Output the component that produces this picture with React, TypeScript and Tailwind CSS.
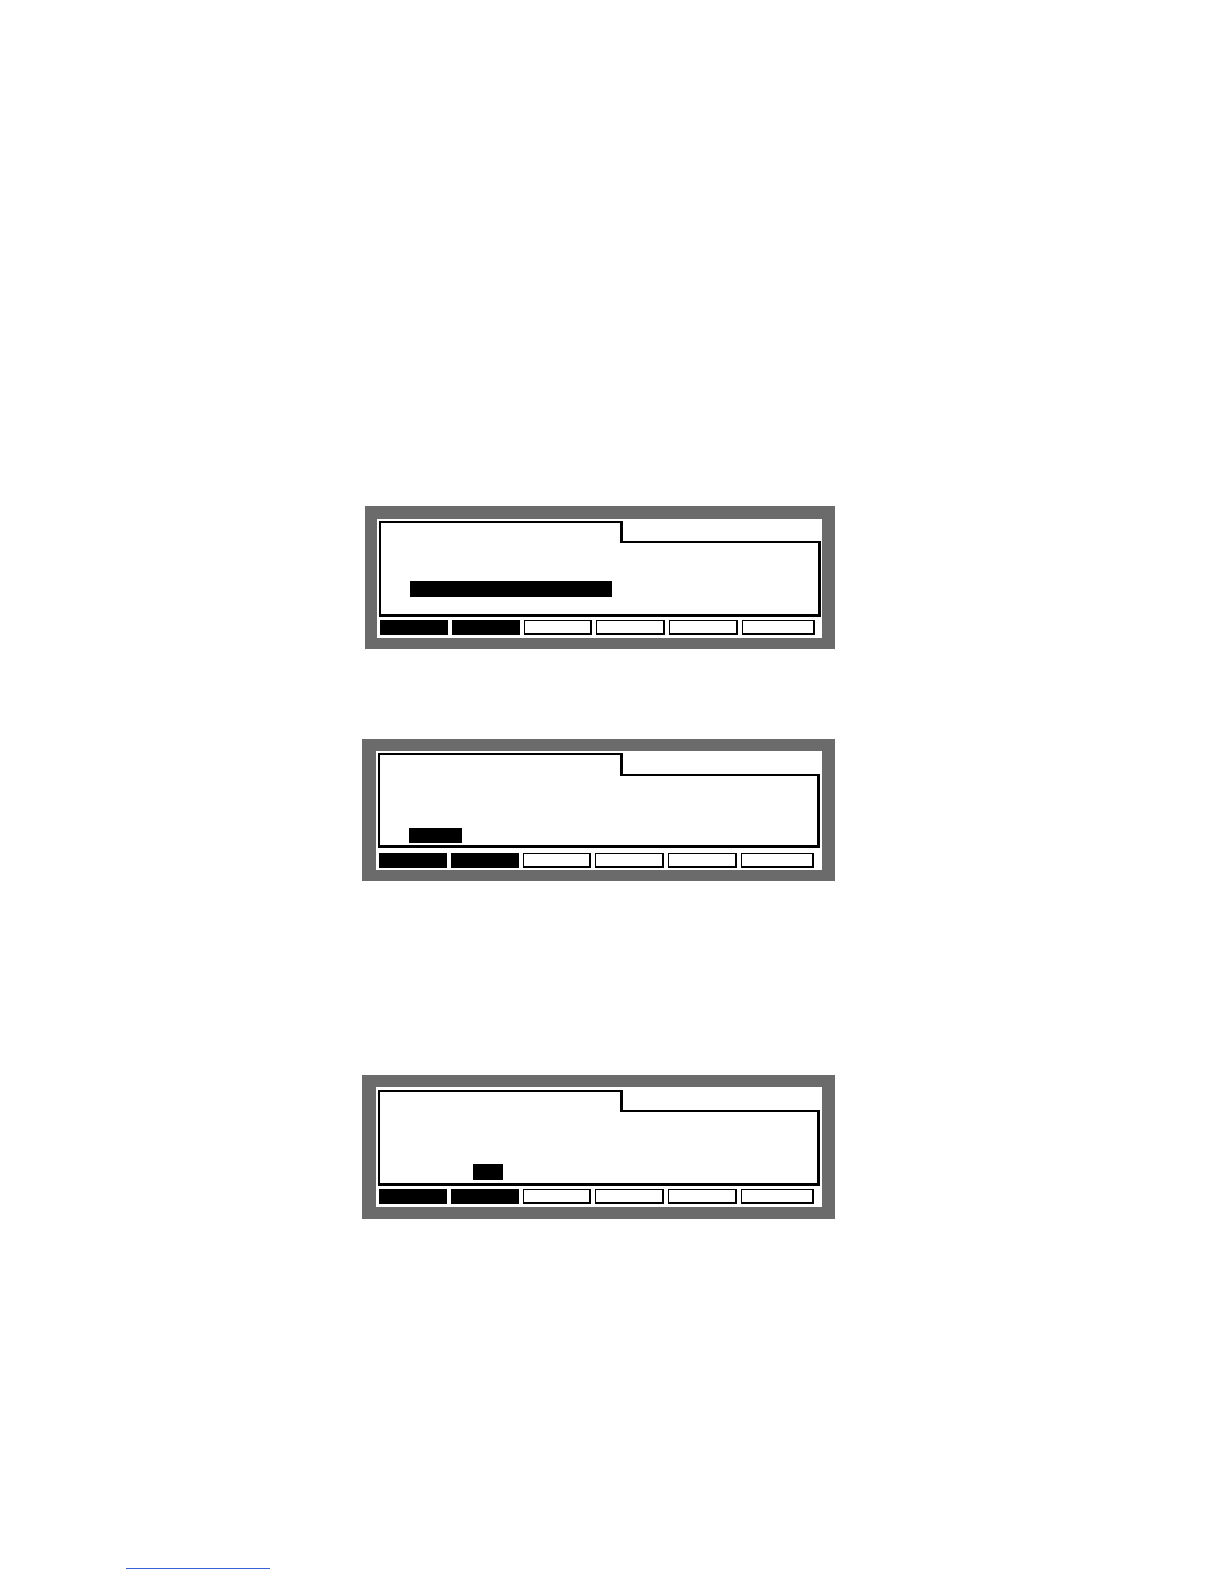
import React from "react";

type PanelProps = {
  ml: string;
  mt: string;
  w: string;
  pad: string;
  innerPad: string;
  tabW: string;
  tabH: string;
  bodyH: string;
  barPad: string;
  barW: string;
  barH: string;
  gapBtn: string;
};

function Buttons({ gap }: { gap: string }) {
  const widths = ["w-[68px]", "w-[68px]", "w-[68px]", "w-[69px]", "w-[69px]", "w-[73px]"];
  return (
    <div className={`flex gap-[4px] ml-[1px] h-[15px] ${gap}`}>
      {widths.map((w, i) =>
        i < 2 ? (
          <div key={i} className={`${w} h-full bg-black`} />
        ) : (
          <div
            key={i}
            className={`${w} h-full bg-white border-t border-l border-r-2 border-b-2 border-black`}
          />
        )
      )}
    </div>
  );
}

function Panel(p: PanelProps) {
  return (
    <div className={`${p.ml} ${p.mt} ${p.w} bg-[#6b6b6b] ${p.pad}`}>
      <div className={`bg-white flex flex-col ${p.innerPad}`}>
        <div className="w-[442px] flex flex-col">
          <div className="flex items-end">
            <div
              className={`${p.tabW} ${p.tabH} border-t-2 border-l-2 border-r-[3px] border-black bg-white shrink-0`}
            />
            <div className="flex-1 h-[2px] bg-black" />
          </div>
          <div
            className={`${p.bodyH} border-l-2 border-r-[3px] border-b-[3px] border-black ${p.barPad}`}
          >
            <div className={`${p.barW} ${p.barH} bg-black`} />
          </div>
        </div>
        <Buttons gap={p.gapBtn} />
      </div>
    </div>
  );
}

export default function App() {
  return (
    <div
      className="w-[1224px] h-[1584px] bg-white pt-[506px] flex flex-col"
      style={{ fontFamily: "'Liberation Sans', sans-serif" }}
    >
      <Panel
        ml="ml-[365px]"
        mt="mt-0"
        w="w-[470px]"
        pad="pt-[13px] pl-[12px] pr-[13px] pb-[11px]"
        innerPad="pl-[2px] pt-[2px] pr-[2px] pb-[3px]"
        tabW="w-[244px]"
        tabH="h-[22px]"
        bodyH="h-[74px]"
        barPad="pl-[29px] pt-[38px]"
        barW="w-[202px]"
        barH="h-[16px]"
        gapBtn="mt-[3px]"
      />
      <Panel
        ml="ml-[362px]"
        mt="mt-[90px]"
        w="w-[473px]"
        pad="pt-[12px] pl-[14px] pr-[13px] pb-[11px]"
        innerPad="pl-[2px] pt-[2px] pr-[2px] pb-[2px]"
        tabW="w-[245px]"
        tabH="h-[23px]"
        bodyH="h-[72px]"
        barPad="pl-[29px] pt-[52px]"
        barW="w-[53px]"
        barH="h-[15px]"
        gapBtn="mt-[5px]"
      />
      <Panel
        ml="ml-[362px]"
        mt="mt-[194px]"
        w="w-[473px]"
        pad="pt-[12px] pl-[14px] pr-[13px] pb-[12px]"
        innerPad="pl-[2px] pt-[3px] pr-[2px] pb-[3px]"
        tabW="w-[245px]"
        tabH="h-[22px]"
        bodyH="h-[74px]"
        barPad="pl-[93px] pt-[52px]"
        barW="w-[30px]"
        barH="h-[16px]"
        gapBtn="mt-[3px]"
      />
      <div className="ml-[126px] mt-[349px] w-[144px] h-px bg-[#3b5fd6]" />
    </div>
  );
}
